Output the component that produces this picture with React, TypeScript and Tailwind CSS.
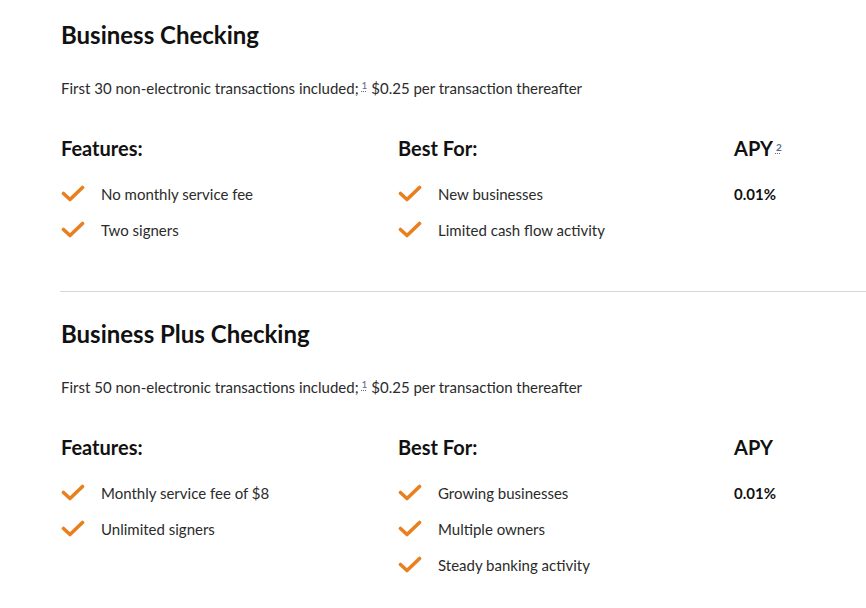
const accounts = [
  {
    name: 'Business Checking',
    count: 30,
    features: ['No monthly service fee', 'Two signers'],
    bestFor: ['New businesses', 'Limited cash flow activity'],
    apy: '0.01%',
    apyNote: true,
  },
  {
    name: 'Business Plus Checking',
    count: 50,
    features: ['Monthly service fee of $8', 'Unlimited signers'],
    bestFor: ['Growing businesses', 'Multiple owners', 'Steady banking activity'],
    apy: '0.01%',
    apyNote: false,
  },
];

function Check() {
  return (
    <svg width="24" height="18" viewBox="0 0 24 18" className="shrink-0">
      <path
        d="M2.5 8.5 L9 14.5 L21.5 2.5"
        fill="none"
        stroke="#e8801f"
        strokeWidth="3.6"
        strokeLinecap="round"
        strokeLinejoin="round"
      />
    </svg>
  );
}

function Note({ n }: { n: number }) {
  return (
    <sup className="text-[10px] text-[#5a6b8a] underline decoration-dotted underline-offset-2 ml-[3px] relative -top-[5px]">
      {n}
    </sup>
  );
}

function List({ items }: { items: string[] }) {
  return (
    <ul className="flex flex-col gap-[14px] mt-[22px]">
      {items.map((t) => (
        <li key={t} className="flex items-center gap-4 h-[22px] text-[15px] text-[#2b2b2b]">
          <Check />
          <span>{t}</span>
        </li>
      ))}
    </ul>
  );
}

function Account({ acc }: { acc: (typeof accounts)[number] }) {
  return (
    <section>
      <h2 className="text-[24px] font-bold text-[#111] leading-[30px]">{acc.name}</h2>
      <p className="mt-[28px] text-[15px] text-[#2b2b2b] leading-[20px]">
        First {acc.count} non-electronic transactions included;<Note n={1} /> $0.25 per transaction thereafter
      </p>
      <div className="grid grid-cols-[337px_336px_200px] mt-[37px]">
        <div>
          <h3 className="text-[20px] font-bold text-[#111] leading-[26px]">Features:</h3>
          <List items={acc.features} />
        </div>
        <div>
          <h3 className="text-[20px] font-bold text-[#111] leading-[26px]">Best For:</h3>
          <List items={acc.bestFor} />
        </div>
        <div>
          <h3 className="text-[20px] font-bold text-[#111] leading-[26px]">
            APY{acc.apyNote && <Note n={2} />}
          </h3>
          <p className="mt-[22px] h-[22px] flex items-center text-[15px] font-bold text-[#111]">{acc.apy}</p>
        </div>
      </div>
    </section>
  );
}

export default function App() {
  return (
    <div className="w-[866px] h-[608px] overflow-hidden bg-white font-['Lato',sans-serif]">
      <div className="pl-[61px] pt-[20px]">
        <Account acc={accounts[0]} />
      </div>
      <div className="ml-[60px] mt-[50px] border-t border-[#d6d6d6]" />
      <div className="pl-[61px] pt-[27px]">
        <Account acc={accounts[1]} />
      </div>
    </div>
  );
}
